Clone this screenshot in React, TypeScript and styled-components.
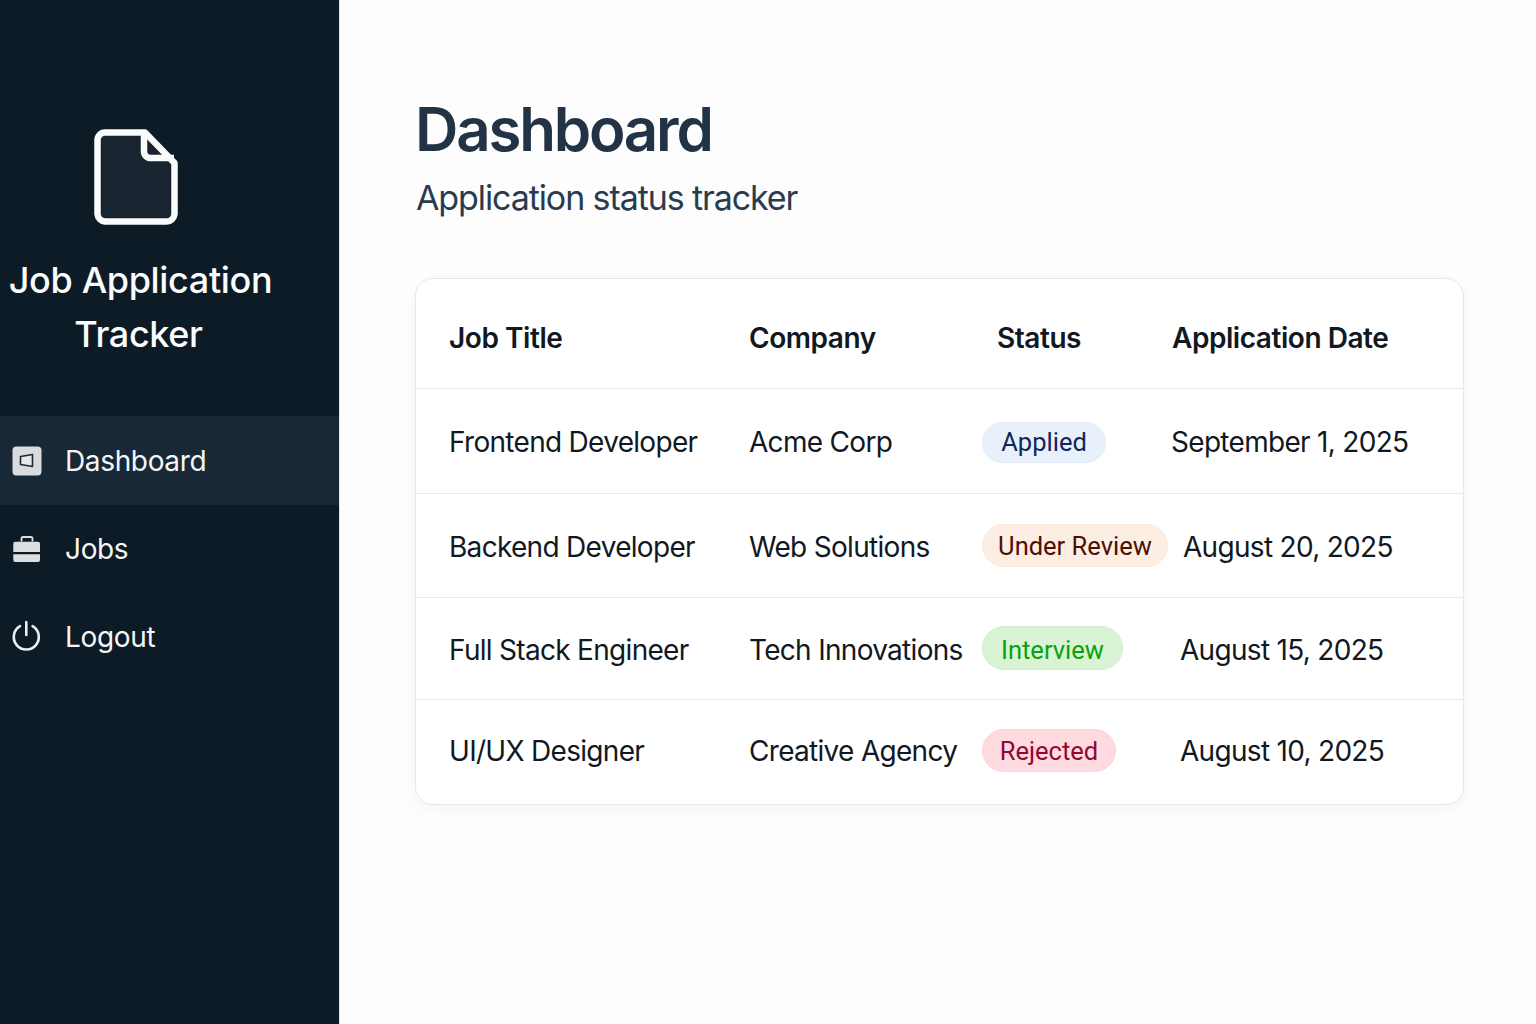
import React from 'react';
import styled, { createGlobalStyle } from 'styled-components';

const GlobalStyle = createGlobalStyle`
  html, body {
    margin: 0;
    padding: 0;
    background: #fdfdfe;
    font-family: Inter, "Noto Sans", sans-serif;
  }
`

const Layout = styled.div`
  display: flex;
  width: 1536px;
  height: 1024px;
  overflow: hidden;
`

// SIDEBAR

const Sidebar = styled.aside`
  width: 339px;
  flex-shrink: 0;
  background: #0d1b26;
  border-right: 1px solid #e4e6e9;
  padding-top: 129px;
  display: flex;
  flex-direction: column;
`
const Brand = styled.div`
  width: 281px;
  display: flex;
  flex-direction: column;
  align-items: center;
`
const Logo = styled.svg`
  width: 84px;
  height: 96px;
  margin-right: 9px;
`
const BrandTitle = styled.h1`
  margin: 28px 0 0;
  font-size: 36px;
  font-weight: 500;
  line-height: 54px;
  letter-spacing: -0.35px;
  text-align: center;
  color: #fbfcfc;
`
const BrandLine = styled.span<{ $pull?: number }>`
  display: block;
  padding-right: ${p => p.$pull || 0}px;
`
const Nav = styled.nav`
  margin-top: 55px;
  display: flex;
  flex-direction: column;
`
const NavItem = styled.a<{ $active?: boolean }>`
  height: ${p => (p.$active ? 89 : 88)}px;
  display: flex;
  align-items: center;
  gap: 23px;
  padding-left: 12px;
  font-size: 28px;
  font-weight: 400;
  letter-spacing: -0.35px;
  color: #f4f6f7;
  background: ${p => (p.$active ? '#182836' : 'transparent')};
`
const NavIcon = styled.svg`
  width: 30px;
  height: 30px;
  flex-shrink: 0;
  overflow: visible;
`

// MAIN

const Main = styled.main`
  flex: 1;
  padding: 93px 72px 0 75px;
`
const Title = styled.h2`
  margin: 0;
  font-size: 60px;
  font-weight: 600;
  line-height: 72px;
  letter-spacing: -2.2px;
  color: #223345;
`
const Subtitle = styled.p`
  margin: 11px 0 0 1px;
  font-size: 34px;
  font-weight: 400;
  line-height: 44px;
  letter-spacing: -1.1px;
  color: #2a3b4e;
`
const Card = styled.section`
  margin-top: 58px;
  background: #fff;
  border: 1px solid #e5e8ec;
  border-radius: 18px;
  box-shadow: 0 4px 14px rgba(30, 45, 60, 0.04);
  overflow: hidden;
`
const Row = styled.div<{ $height: number; $nudge: number; $head?: boolean }>`
  display: grid;
  grid-template-columns: 300px 233px 1fr;
  align-items: center;
  height: ${p => p.$height}px;
  padding: ${p => Math.max(p.$nudge, 0)}px 0 ${p => Math.max(-p.$nudge, 0)}px 33px;
  box-sizing: border-box;
  font-size: 28px;
  font-weight: ${p => (p.$head ? 600 : 400)};
  letter-spacing: ${p => (p.$head ? -0.45 : -0.7)}px;
  color: #11181f;
  & + & {
    border-top: 1px solid #e8eaed;
  }
`
const StatusCell = styled.div`
  display: flex;
  align-items: center;
  min-width: 0;
`
const HeadStatus = styled.span`
  width: 190px;
  padding-left: 15px;
  box-sizing: border-box;
  flex-shrink: 0;
`
const Pill = styled.span<{ $bg: string; $fg: string; $line: string; $width: number; $tall: number; $lift: number; $drop: number }>`
  display: inline-flex;
  align-items: center;
  justify-content: center;
  height: ${p => p.$tall}px;
  width: ${p => p.$width}px;
  margin-bottom: ${p => p.$lift}px;
  padding-top: ${p => p.$drop}px;
  flex-shrink: 0;
  box-sizing: border-box;
  border-radius: 22px;
  border: 1px solid ${p => p.$line};
  background: ${p => p.$bg};
  color: ${p => p.$fg};
  font-family: Roboto, Inter, sans-serif;
  font-size: 25.5px;
  letter-spacing: 0;
`
const DateText = styled.span<{ $gap: number }>`
  margin-left: ${p => p.$gap}px;
  white-space: nowrap;
`

const rows = [
  { title: 'Frontend Developer', company: 'Acme Corp', status: 'Applied', date: 'September 1, 2025', bg: '#e8f1fb', fg: '#10265c', line: '#e2ecf8', width: 124, tall: 41, lift: 0, drop: 0, gap: 65, height: 105, nudge: 2 },
  { title: 'Backend Developer', company: 'Web Solutions', status: 'Under Review', date: 'August 20, 2025', bg: '#fdeee3', fg: '#4d0f06', line: '#fbe8db', width: 186, tall: 43, lift: 3, drop: 0, gap: 15, height: 104, nudge: 3 },
  { title: 'Full Stack Engineer', company: 'Tech Innovations', status: 'Interview', date: 'August 15, 2025', bg: '#d8f4d4', fg: '#07a20d', line: '#cff0cb', width: 141, tall: 44, lift: 3, drop: 3, gap: 57, height: 102, nudge: 2 },
  { title: 'UI/UX Designer', company: 'Creative Agency', status: 'Rejected', date: 'August 10, 2025', bg: '#fddbe1', fg: '#96072f', line: '#fbd3da', width: 134, tall: 43, lift: 2, drop: 1, gap: 64, height: 105, nudge: -2 },
]

const App: React.FC = () => (
  <Layout>
    <GlobalStyle />
    <Sidebar>
      <Brand>
        <Logo viewBox="0 0 84 96" fill="none">
          <path d="M11 3.5H51L80.5 34V85A8 8 0 0 1 72.5 92.5H11A8 8 0 0 1 3.5 85V11A7.5 7.5 0 0 1 11 3.5Z" fill="#182531" stroke="#fafbfb" strokeWidth="6.5" strokeLinejoin="round" />
          <path d="M50 4V22A6.5 6.5 0 0 0 56.5 29H80" stroke="#fafbfb" strokeWidth="6.5" strokeLinejoin="round" />
        </Logo>
        <BrandTitle>
          <BrandLine>Job Application</BrandLine>
          <BrandLine $pull={4}>Tracker</BrandLine>
        </BrandTitle>
      </Brand>
      <Nav>
        <NavItem $active>
          <NavIcon viewBox="0 0 30 30">
            <rect x="0.5" y="0.5" width="29" height="29" rx="4" fill="#d9dcdf" />
            <path d="M8.5 10.5L20.5 8.5V20.5L8.5 18.5Z" fill="#e6e8ea" stroke="#1c2a36" strokeWidth="1.6" strokeLinejoin="round" />
          </NavIcon>
          Dashboard
        </NavItem>
        <NavItem>
          <NavIcon viewBox="0 0 30 30">
            <path d="M9.5 7.5V4A2 2 0 0 1 11.5 3H18.5A2 2 0 0 1 20.5 4V7.5" fill="none" stroke="#dcdfe2" strokeWidth="1.8" />
            <path d="M3.3 7.7H26A2 2 0 0 1 28 9.7V18H1.3V9.7A2 2 0 0 1 3.3 7.7Z" fill="#dcdfe2" />
            <path d="M1.3 20.3H28V26A2 2 0 0 1 26 28H3.3A2 2 0 0 1 1.3 26Z" fill="#dcdfe2" />
          </NavIcon>
          Jobs
        </NavItem>
        <NavItem>
          <NavIcon viewBox="0 0 30 30" fill="none" stroke="#eceef0" strokeWidth="2.6" strokeLinecap="round">
            <path d="M14.3 0V13" />
            <path d="M8 4.2A12.5 12.5 0 1 0 20.6 4.2" />
          </NavIcon>
          Logout
        </NavItem>
      </Nav>
    </Sidebar>
    <Main>
      <Title>Dashboard</Title>
      <Subtitle>Application status tracker</Subtitle>
      <Card>
        <Row $height={109} $nudge={9} $head>
          <span>Job Title</span>
          <span>Company</span>
          <StatusCell>
            <HeadStatus>Status</HeadStatus>
            <span>Application Date</span>
          </StatusCell>
        </Row>
        {rows.map(r => (
          <Row key={r.title} $height={r.height} $nudge={r.nudge}>
            <span>{r.title}</span>
            <span>{r.company}</span>
            <StatusCell>
              <Pill $bg={r.bg} $fg={r.fg} $line={r.line} $width={r.width} $tall={r.tall} $lift={r.lift} $drop={r.drop}>{r.status}</Pill>
              <DateText $gap={r.gap}>{r.date}</DateText>
            </StatusCell>
          </Row>
        ))}
      </Card>
    </Main>
  </Layout>
)

export default App
